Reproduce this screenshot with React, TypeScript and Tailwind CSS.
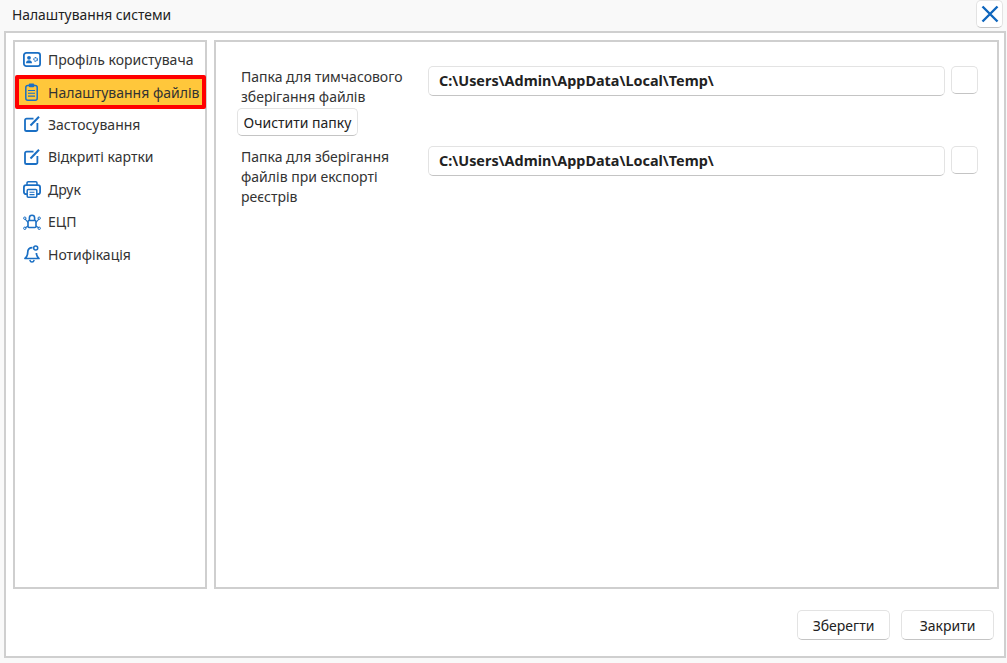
import React from 'react';

const ProfileIcon = () => (
  <svg viewBox="0 0 18 15" className="w-[18px] h-[15px] text-[#1a6fc4]" fill="none">
    <rect x="0.9" y="0.9" width="16.2" height="13.2" rx="2.4" stroke="currentColor" strokeWidth="1.8" />
    <circle cx="6" cy="5.8" r="1.9" fill="currentColor" />
    <path d="M3 11.2c0-2 1.2-3 3-3s3 1 3 3z" fill="currentColor" />
    <circle cx="12.6" cy="7.4" r="1.7" stroke="currentColor" strokeWidth="1.2" strokeDasharray="1.6 0.5" />
  </svg>
);

const ClipboardIcon = () => (
  <svg viewBox="0 0 13 18" className="w-[13px] h-[18px] text-[#1a6fc4]" fill="none">
    <rect x="0.8" y="2.5" width="11.4" height="14.7" rx="2" stroke="currentColor" strokeWidth="1.5" />
    <rect x="3.8" y="0.6" width="5.4" height="3.6" rx="1" fill="currentColor" />
    <path d="M3 7.5h7M3 10.3h7M3 13.1h7" stroke="currentColor" strokeWidth="1.1" />
  </svg>
);

const EditIcon = () => (
  <svg viewBox="0 0 16 16" className="w-4 h-4 text-[#1a6fc4]" fill="none">
    <path d="M9.5 2.6H2.6A1.6 1.6 0 0 0 1 4.2v9.2A1.6 1.6 0 0 0 2.6 15h9.2a1.6 1.6 0 0 0 1.6-1.6V7" stroke="currentColor" strokeWidth="1.8" />
    <path d="M6.5 9.5 15 0.8" stroke="currentColor" strokeWidth="2" />
  </svg>
);

const PrintIcon = () => (
  <svg viewBox="0 0 18 17" className="w-[18px] h-[17px] text-[#1a6fc4]" fill="none">
    <path d="M4 4.5V2a1.2 1.2 0 0 1 1.2-1.2h7.6A1.2 1.2 0 0 1 14 2v2.5" stroke="currentColor" strokeWidth="1.5" />
    <rect x="0.9" y="4.2" width="16.2" height="9" rx="2.2" stroke="currentColor" strokeWidth="1.8" />
    <rect x="4.2" y="8.6" width="9.6" height="7.6" rx="1" fill="#fff" stroke="currentColor" strokeWidth="1.5" />
    <path d="M6.5 11.3h5M6.5 13.6h5" stroke="currentColor" strokeWidth="1.1" />
  </svg>
);

const SignIcon = () => (
  <svg viewBox="0 0 18 16" className="w-[18px] h-4 text-[#1a6fc4]" fill="none">
    <rect x="5" y="6.5" width="8" height="7" rx="1" stroke="currentColor" strokeWidth="1.6" />
    <path d="M6.4 6.5V3.8a2.6 2.6 0 0 1 5.2 0v2.7" stroke="currentColor" strokeWidth="1.6" />
    <path d="M5 8.5 2 4.8M13 8.5l3-3.7M5 12l-3 2M13 12l3 2" stroke="currentColor" strokeWidth="1.1" />
    <circle cx="1.8" cy="4.2" r="1.2" stroke="currentColor" />
    <circle cx="16.2" cy="4.2" r="1.2" stroke="currentColor" />
    <circle cx="1.8" cy="14.3" r="1.2" stroke="currentColor" />
    <circle cx="16.2" cy="14.3" r="1.2" stroke="currentColor" />
  </svg>
);

const BellIcon = () => (
  <svg viewBox="0 0 16 18" className="w-4 h-[18px] text-[#1a6fc4]" fill="none">
    <path d="M8.5 2.6C5.2 2.6 3.7 5 3.7 7.6c0 2.8-1 4.4-2.7 5.9h14c-1.6-1.5-2.6-3-2.6-5.4" stroke="currentColor" strokeWidth="1.7" strokeLinejoin="round" />
    <path d="M5.8 15c.4 1.4 1.2 2.1 2.2 2.1s1.8-.7 2.2-2.1" stroke="currentColor" strokeWidth="1.5" />
    <circle cx="11.7" cy="3.1" r="2" stroke="currentColor" strokeWidth="1.5" />
  </svg>
);

const items = [
  { label: 'Профіль користувача', icon: <ProfileIcon /> },
  { label: 'Налаштування файлів', icon: <ClipboardIcon />, active: true },
  { label: 'Застосування', icon: <EditIcon /> },
  { label: 'Відкриті картки', icon: <EditIcon /> },
  { label: 'Друк', icon: <PrintIcon /> },
  { label: 'ЕЦП', icon: <SignIcon /> },
  { label: 'Нотифікація', icon: <BellIcon /> },
];

const btn = 'bg-white border border-[#e3e3e3] border-b-[#c4c4c4] rounded-[5px] text-[#222]';
const path = 'C:\\Users\\Admin\\AppData\\Local\\Temp\\';

const PathRow = ({ lines }: { lines: string[] }) => (
  <div className="flex items-start">
    <div className="w-[191px] shrink-0 pt-[1px] pl-[4px] text-[14px] leading-[20px] text-[#333]">
      {lines.map((l) => (
        <div key={l} className="whitespace-nowrap">{l}</div>
      ))}
    </div>
    <div className={`${btn} w-[517px] h-[30px] flex items-center pl-[10px] text-[14.4px] font-bold text-[#1c1c1c]`}>{path}</div>
    <div className={`${btn} ml-[6px] w-[27px] h-[28px]`} />
  </div>
);

export default function App() {
  return (
    <div className="w-[1007px] h-[663px] bg-[#f9f9f9] flex flex-col overflow-hidden font-['Noto_Sans','Open_Sans',sans-serif]">
      <div className="h-[31px] shrink-0 flex items-start justify-between pl-[12px] pr-[4px]">
        <span className="mt-[5px] text-[13.85px] leading-[20px] text-[#222]">Налаштування системи</span>
        <button className={`${btn} w-[27px] h-[28px] flex items-center justify-center`}>
          <svg viewBox="0 0 18 18" className="w-[18px] h-[18px]" fill="none">
            <path d="M1.5 1.5l15 15M16.5 1.5l-15 15" stroke="#0f66bd" strokeWidth="2.4" />
          </svg>
        </button>
      </div>

      <div className="ml-[4px] h-[627px] w-[1002px] bg-white border-2 border-[#cfcfcf] flex flex-col">
        <div className="h-[549px] mt-[7px] ml-[7px] flex gap-[7px]">
          <div className="w-[194px] h-full border-2 border-[#cfcfcf] pt-[1.5px] px-[2px] flex flex-col">
            {items.map((it) => (
              <div
                key={it.label}
                className={`shrink-0 flex items-center text-[14px] text-[#333] ${it.active ? 'h-[33.4px] -my-[0.5px] bg-[#ffc73b] border-[4px] border-[#ff0000] rounded-[2px] -ml-[2px] -mr-[3px] relative' : 'h-[32.4px]'}`}
              >
                <span className={`w-[20px] flex justify-center ${it.active ? 'ml-[2px]' : 'ml-[5px]'}`}>{it.icon}</span>
                <span className={`whitespace-nowrap ${it.active ? 'ml-[7px]' : 'ml-[6px]'}`}>{it.label}</span>
              </div>
            ))}
          </div>

          <div className="w-[785px] h-full border-2 border-[#cfcfcf] pt-[24px] pl-[21px] pr-[15px]">
            <PathRow lines={['Папка для тимчасового', 'зберігання файлів']} />
            <button className={`${btn} block mt-[1px] w-[121px] h-[28px] text-[14px]`}>Очистити папку</button>
            <div className="mt-[10px]">
              <PathRow lines={['Папка для зберігання', 'файлів при експорті', 'реєстрів']} />
            </div>
          </div>
        </div>

        <div className="flex justify-end gap-[11px] mt-[21px] pr-[10px]">
          <button className={`${btn} w-[93px] h-[30px] text-[14px]`}>Зберегти</button>
          <button className={`${btn} w-[93px] h-[30px] text-[14px]`}>Закрити</button>
        </div>
      </div>
    </div>
  );
}
